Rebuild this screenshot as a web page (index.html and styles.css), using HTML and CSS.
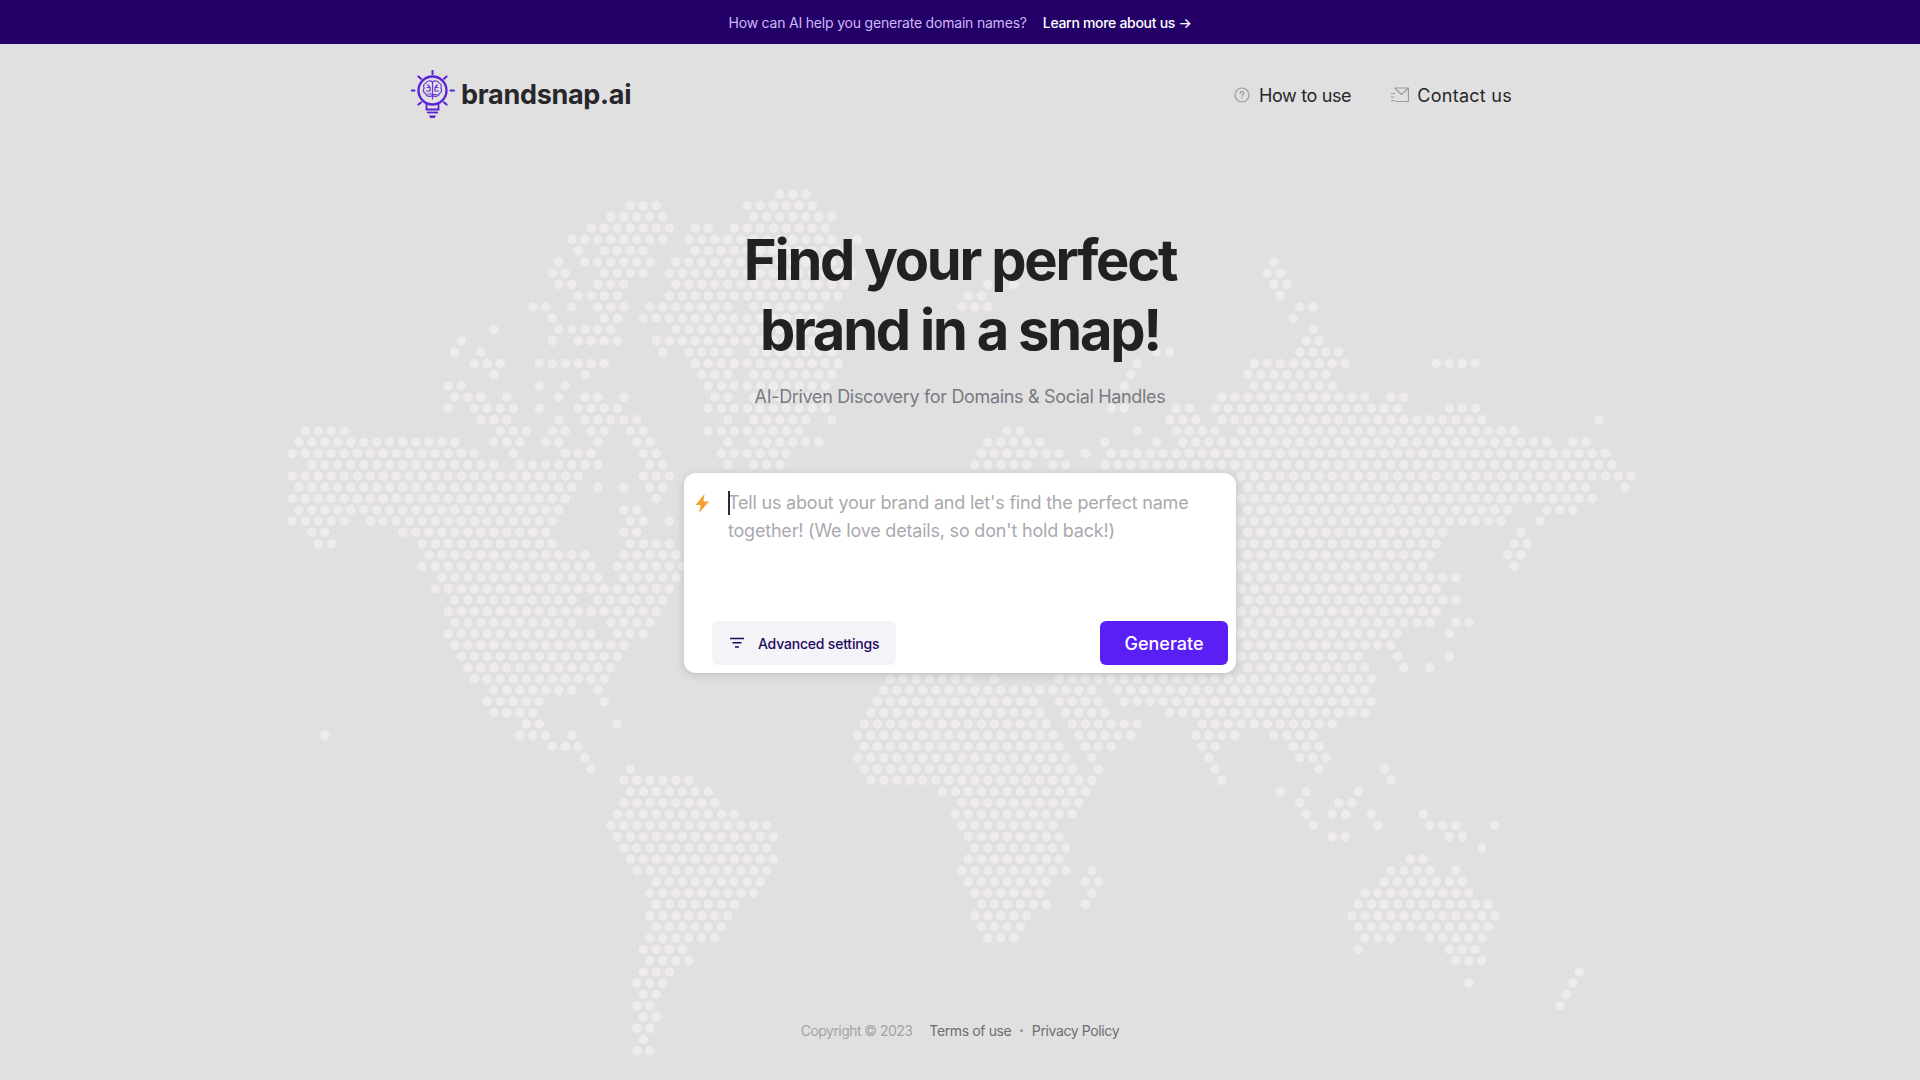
FILE: index.html
```html
<!DOCTYPE html>
<html lang="en">
<head>
<meta charset="utf-8">
<title>brandsnap.ai</title>
<link rel="stylesheet" href="styles.css">
</head>
<body>
<svg class="world" width="1920" height="1080" viewBox="0 0 1920 1080" aria-hidden="true"><path id="world-dots" class="world-dots" d=""/></svg>
<div class="page">
  <div class="banner">
    <span class="banner-q">How can AI help you generate domain names?</span>
    <a class="banner-link" href="#">Learn more about us →</a>
  </div>
  <header class="header">
    <a class="brand" href="#">
      <svg class="brand-icon" width="44" height="50" viewBox="0 0 44 50" fill="none" stroke="#5b21d6" stroke-width="2">
        <circle cx="21.5" cy="20.5" r="14" stroke-width="2.300"/>
        <path d="M21.5 .5v3.5M7.4 6.4l2.6 2.4M35.6 6.4l-2.6 2.4M0 20.5h3.5M39.5 20.5H43M7.4 34.6l2.6-2.2M35.6 34.6l-2.6-2.2" stroke-linecap="round"/>
        <path d="M15.5 34v5.5h12V34" stroke-width="1.8"/>
        <path d="M16 42.5h11" stroke-width="1.8"/>
        <path d="M18 45.5h7l-1.4 2.5h-4.2z" fill="#5b21d6" stroke="none"/>
        <path d="M21.500 11.500v18M21.500 12c-2-1.800-5.500-1.200-6.500 1-2.300.6-3 3.300-1.800 5-1.500 1.800-.8 4.500 1.200 5.300 .7 2.800 4.600 4.200 7.100 2.200M21.500 12c2-1.800 5.500-1.200 6.500 1 2.300.6 3 3.300 1.800 5 1.500 1.800 .8 4.500-1.200 5.300-.7 2.800-4.600 4.200-7.100 2.200M15.500 17.500h3.500v3.500h-4M27.500 17.500h-3.500v3.500h4M16.500 24h5M26.500 24.500h-5M26.500 14.500l-2.500 3M16.500 14.500l2.500 3" stroke-width="1.200" stroke="#6a35da"/>
      </svg>
      <span class="brand-name">brandsnap.ai</span>
    </a>
    <nav class="nav">
      <a class="nav-item nav-how" href="#">
        <svg width="16" height="16" viewBox="0 0 16 16" fill="none" stroke="#9b9b9b" stroke-width="1.200"><circle cx="8" cy="8" r="7"/><path d="M6.200 6.300c0-1 .8-1.700 1.800-1.700s1.800.7 1.800 1.600c0 1.500-1.800 1.500-1.800 3" stroke-linecap="round"/><circle cx="8" cy="11.300" r=".7" fill="#9b9b9b" stroke="none"/></svg>
        <span>How to use</span>
      </a>
      <a class="nav-item nav-contact" href="#">
        <svg width="18" height="16" viewBox="0 0 18 16" fill="none" stroke="#9b9b9b" stroke-width="1.200"><path d="M3.500 1h14v13.500H4.500M3.500 1l7 6.500 7-6.500M0 6.500h4M0 10h3M0 13.500h4"/></svg>
        <span>Contact us</span>
      </a>
    </nav>
  </header>
  <main class="hero">
    <h1 class="title">Find your perfect<br>brand in a snap!</h1>
    <p class="subtitle">AI-Driven Discovery for Domains &amp; Social Handles</p>
    <section class="card">
      <div class="prompt">
        <svg class="bolt" width="15" height="19" viewBox="0 0 15 19"><path d="M9.500 0 .5 11h5.200L4 19l10-11.500H8.500z" fill="#f2a22e"/></svg>
        <div class="prompt-text"><span class="caret"></span>Tell us about your brand and let's find the perfect name together! (We love details, so don't hold back!)</div>
      </div>
      <div class="actions">
        <button class="btn-advanced" type="button">
          <svg width="14" height="12" viewBox="0 0 14 12" fill="none" stroke="#1d0a5e" stroke-width="1.500"><path d="M0 1.500h14M2.500 5.800h9M5 10h4"/></svg>
          <span>Advanced settings</span>
        </button>
        <button class="btn-generate" type="button">Generate</button>
      </div>
    </section>
  </main>
  <footer class="footer">
    <span class="copyright">Copyright © 2023</span>
    <a class="foot-link" href="#">Terms of use</a>
    <span class="dot">•</span>
    <a class="foot-link" href="#">Privacy Policy</a>
  </footer>
</div>
<script src="map.js"></script>
</body>
</html>
```
FILE: styles.css
```css
* { box-sizing: border-box; }
html, body { margin: 0; height: 100%; }
body {
  background: #e0e0e0;
  font-family: "Inter", "Noto Sans", sans-serif;
  color: #27272a;
  overflow: hidden;
  position: relative;
}
a { color: inherit; text-decoration: none; }

.world { position: absolute; left: 0; top: 0; }
.world-dots { fill: none; stroke: #eeeaed; stroke-width: 9.500; stroke-linecap: round; }

.page {
  position: relative;
  height: 1080px;
  display: flex;
  flex-direction: column;
}

.banner {
  height: 44px;
  flex: none;
  background: #230067;
  display: flex;
  justify-content: center;
  align-items: center;
  gap: 16px;
  font-size: 14px;
  letter-spacing: -.2px;
}
.banner-q { color: #cdb8f8; }
.banner-link { color: #fff; font-weight: 500; letter-spacing: -.3px; }

.header {
  width: 1101px;
  margin: 26px 0 0 411px;
  height: 50px;
  flex: none;
  display: flex;
  justify-content: space-between;
  align-items: center;
}
.brand { display: flex; align-items: center; gap: 6px; }
.brand-icon { flex: none; }
.brand-name { font-size: 27px; font-weight: 700; letter-spacing: -.3px; color: #27272a; margin-top: -2px; }
.nav { display: flex; gap: 40px; }
.nav-item { display: flex; align-items: center; gap: 9px; font-size: 18px; }
.nav-how { letter-spacing: -.35px; }
.nav-contact { letter-spacing: .27px; gap: 8px; }

.hero {
  flex: none;
  margin-top: 105px;
  display: flex;
  flex-direction: column;
  align-items: center;
}
.title {
  margin: 0;
  font-size: 56px;
  line-height: 70px;
  font-weight: 700;
  letter-spacing: -2.200px;
  text-align: center;
  color: #212124;
}
.subtitle {
  margin: 18px 0 0;
  font-size: 18px;
  line-height: 28px;
  letter-spacing: -.33px;
  color: #7a7a82;
}
.card {
  width: 552px;
  height: 200px;
  margin-top: 62px;
  background: #fff;
  border-radius: 12px;
  box-shadow: 0 2px 10px rgba(0, 0, 0, .14);
  display: flex;
  flex-direction: column;
  justify-content: space-between;
  padding: 16px 8px 8px 11px;
}
.prompt { display: flex; gap: 18px; }
.bolt { flex: none; margin-top: 5px; }
.prompt-text {
  position: relative;
  width: 480px;
  font-size: 18px;
  line-height: 28px;
  letter-spacing: -.2px;
  color: #a9a9af;
}
.caret {
  position: absolute;
  left: 0;
  top: 2px;
  width: 1.500px;
  height: 24px;
  background: #2a2a3a;
}
.actions { display: flex; justify-content: space-between; padding-left: 17px; }
.btn-advanced, .btn-generate {
  font-family: inherit;
  height: 44px;
  border: 0;
  border-radius: 6px;
  display: flex;
  align-items: center;
}
.btn-advanced {
  width: 184px;
  padding: 0 0 0 18px;
  gap: 14px;
  background: #f4f3f8;
  color: #1d0a5e;
  font-size: 14px;
  font-weight: 500;
  letter-spacing: -.2px;
}
.btn-generate {
  width: 128px;
  justify-content: center;
  background: #5a1ff5;
  color: #fff;
  font-size: 18px;
  font-weight: 500;
}

.footer {
  margin-top: auto;
  height: 20px;
  margin-bottom: 40px;
  display: flex;
  justify-content: center;
  align-items: center;
  font-size: 14px;
}
.copyright { color: #a3a3a3; margin-right: 17px; letter-spacing: -.55px; }
.foot-link { color: #6d6d72; letter-spacing: -.38px; }
.dot { color: #8a8a8a; font-size: 8px; margin: 0 8px; }
```
FILE: map.js
```js
// Dotted world map. Each block: origin x, origin y, then rows of
// [y offset, start, count, start, count...] in 1/3 px, snapped to a staggered grid.
var sheets = [
 [280,180,[
  [78,1050,3],[112,991,5],[146,933,7,1245,2,1362,1],[179,875,8,1225,5],[213,894,1,972,4,1245,4],
  [247,836,1,914,6,1186,6],[281,816,2,972,4,1167,6],[315,836,2,953,3,1186,6],[349,894,4,1167,6],
  [382,757,2,875,1,953,3,1109,7],[416,816,1,972,2,1089,8],[450,641,1,836,5,1186,6],
  [484,543,1,816,1,894,4,1128,7],[517,523,1,601,1,1148,1,1225,4],[551,582,3,777,6,1245,4],
  [585,641,1,914,1,1264,3],[619,504,2,777,1,855,1,1284,3],[652,523,3,680,1,836,1,914,2,1031,1,1303,2],
  [686,504,1,582,4,777,1,894,4,1284,3],[720,601,3,836,1,914,5,1343,1],
  [754,75,4,660,3,816,2,933,2,1050,2,1284,3],[788,55,13,641,3,797,2,953,1,1070,2,1343,1],
  [822,36,15,699,1,855,3,1089,2,1323,2],[855,94,15,719,7,1109,2,1343,1],[889,36,23,1089,3],
  [923,55,22,953,1,1031,1,1109,2],[957,36,22,1128,1],[990,55,21,1031,2],
  [1024,36,5,270,15,1050,2,1167,1],[1058,94,2,367,12,1031,2],[1092,114,2,426,11,1050,4],
  [1126,445,13,1031,5],[1160,426,14,1011,6],[1194,484,13,1031,5],[1227,465,19],
  [1261,523,10,953,6],[1295,504,17]
 ]],
 [300,620,[
  [8,465,10,933,4],[42,445,12,953,3],[76,465,14],[110,484,13],[144,504,12],[178,523,11],
  [211,582,7,894,1],[245,562,5,913,1],[279,582,4],[312,680,2,952,1],[346,73,1,660,3,816,1],
  [380,757,3],[414,855,1],[448,874,1,991,1],[481,972,6],[515,991,7],[549,972,8],[583,952,10],
  [617,933,13],[651,952,13],[685,972,12],[718,991,12],[752,1011,11],[786,1070,9],[820,1050,9],
  [853,1070,7],[887,1050,7],[921,1070,6],[955,1050,6],[988,1031,4],[1022,1050,4],[1056,1031,3],
  [1090,1011,3],[1124,1031,2],[1158,1011,2],[1191,1031,2],[1225,1011,2],[1259,1031,1],[1293,1011,2]
 ]],
 [740,180,[
  [43,118,3],[78,21,6],[112,40,7],[146,21,7],[179,40,7,352,1],[213,21,8],[247,40,8],[281,21,8,333,1],
  [315,40,8,742,1,820,1],[349,21,8,684,2],[382,40,6,665,3],[416,21,6],[450,40,6],[484,21,7],
  [517,40,7,1250,2],[551,21,8,1192,1],[585,40,7,1172,1],[619,21,7,1153,1],[652,40,6],
  [686,21,7,1114,2,1309,2],[720,40,5,275,1,1290,3],[754,21,5,803,2,1192,1,1309,2],
  [788,40,6,742,5,1095,1,1250,1,1329,2],[822,21,4,723,7,1036,1,1114,7],[855,40,3,703,5,938,2,1095,8]
 ]],
 [1200,240,[
  [66,222,1],[100,203,2],[134,222,2],[168,242,1],[202,301,2],[235,281,1],[269,340,1],[303,320,2],
  [337,300,4],[370,164,8,710,4],[404,144,7],[438,164,7],[472,66,12,573,2],[506,47,15,749,3],
  [540,66,21,1198,1],[574,8,2,125,22],[607,27,27,1120,2],[641,8,32],[675,27,32],[709,125,31],
  [743,144,27,1276,1],[776,125,28],[810,144,21,1041,3],[844,125,21,1022,1],[878,144,16,963,1],
  [912,125,16,944,2],[946,144,15,925,2],[980,125,15,944,1],[1014,144,17],[1047,125,16],[1081,144,17],
  [1115,125,16],[1149,144,15,768,2],[1183,125,13,749,1],[1216,144,12],[1250,125,10,593,1,749,1],
  [1284,144,10,612,1,690,1]
 ]],
 [840,660,[
  [57,150,7,462,1,658,25],[90,131,17,833,20],[124,112,13,658,4,853,20],[158,92,14,678,4,990,16],
  [192,73,15,697,6,1087,11],[226,53,16,717,5,1068,4,1302,4],[260,73,16,736,3,1087,2],
  [294,53,17,756,1,1107,1],[328,73,17,775,1,1127,1],[362,92,18,1147,1],[396,306,12],[430,366,10],
  [464,347,10],[497,366,8],[530,386,8],[564,405,8],[598,386,8],[632,366,9,756,1],[666,386,7,737,2],
  [699,405,6,756,1],[733,425,6,737,1],[767,405,5],[801,425,4],[834,445,3]
 ]],
 [1240,680,[
  [200,162,3],[234,181,3],[268,238,1,433,1],[301,453,1],[335,122,1,200,1,356,1],[369,180,1,298,2],
  [403,200,1,278,2,395,1,551,1],[437,220,1,414,1,571,3,766,1],[470,278,2,629,2],[504,727,1],
  [538,512,2],[572,454,4,649,1],[606,434,7],[639,375,9],[673,356,11],[707,337,12],[741,356,11],
  [774,376,3,571,5],[808,356,1,629,3],[842,649,3],[876,1019,1],[909,688,1,1000,1],[943,981,1],[977,961,1]
 ]]
];
var seen = {}, d = [];
sheets.forEach(function (s) {
  s[2].forEach(function (row) {
    var y = s[1] + row[0] / 3, r = Math.round((y - 194.3) / 11.27);
    var ox = r % 2 ? 292.3 : 298.8;
    for (var j = 1; j < row.length; j += 2) {
      for (var i = 0; i < row[j + 1]; i++) {
        var k = Math.round((s[0] + (row[j] + 39 * i) / 3 - ox) / 13), key = r + ',' + k;
        if (!seen[key]) {
          seen[key] = 1;
          d.push('M' + (ox + 13 * k).toFixed(1) + ' ' + (194.3 + 11.27 * r).toFixed(1) + 'h.01');
        }
      }
    }
  });
});
document.getElementById('world-dots').setAttribute('d', d.join(''));
```
